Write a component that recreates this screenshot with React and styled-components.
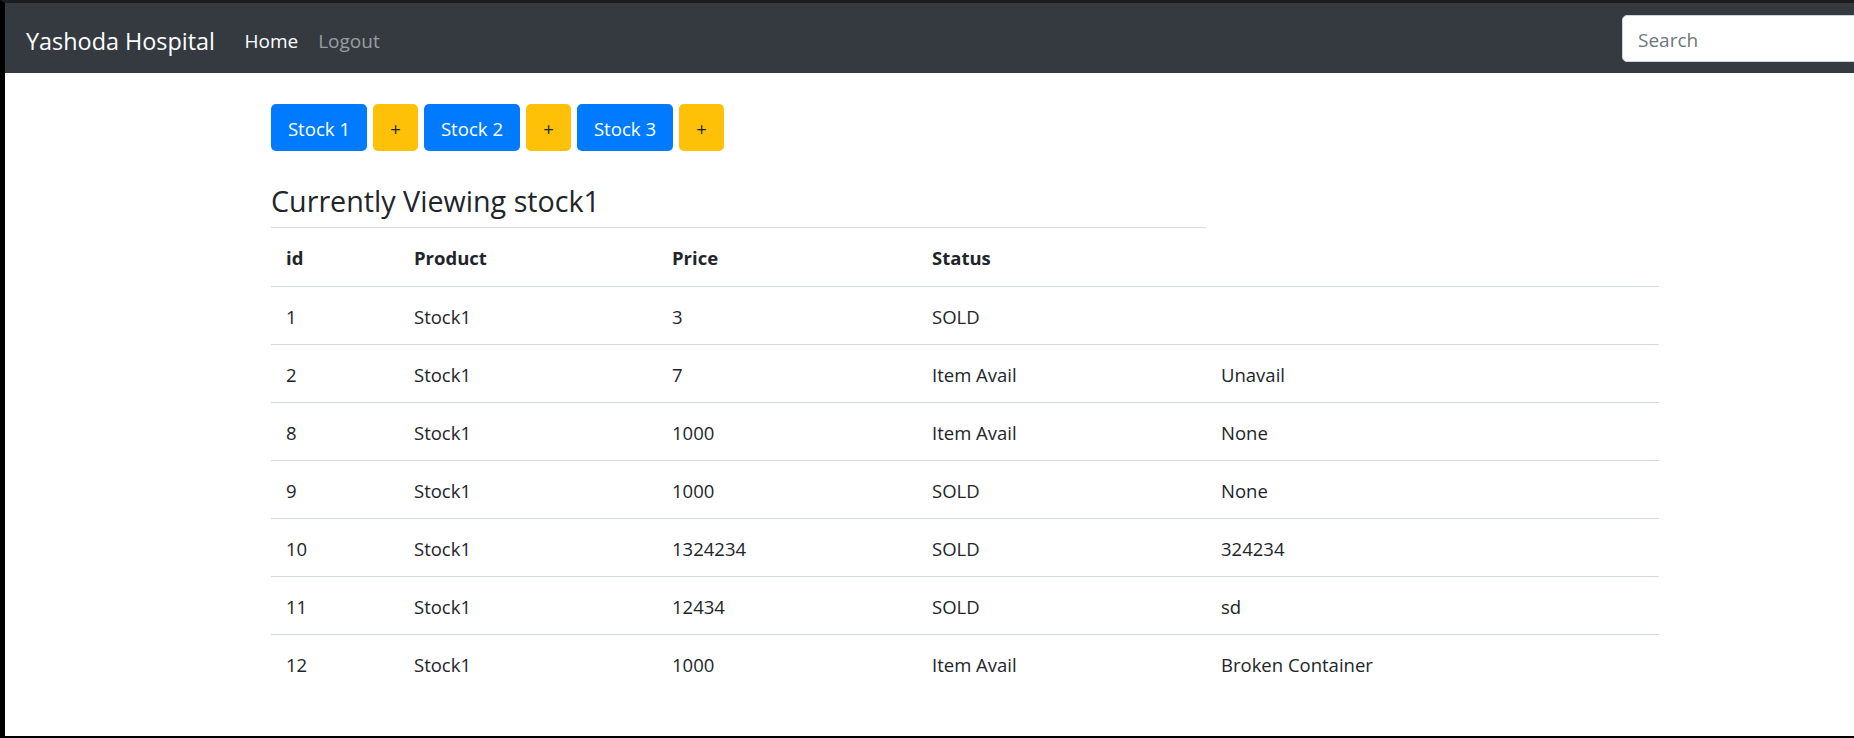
import React from "react";
import styled, { createGlobalStyle } from "styled-components";

const GlobalStyle = createGlobalStyle`
  html, body {
    margin: 0;
    padding: 0;
    background: #fff;
  }
  body {
    font-family: "Open Sans", "Noto Sans", Arial, sans-serif;
    color: #212529;
  }
  * {
    box-sizing: border-box;
  }
`;

const Frame = styled.div`
  height: 738px;
  overflow: hidden;
  border-left: 5px solid #000;
  border-top: 3px solid #1c1c1e;
  border-bottom: 2px solid #000;
  display: flex;
  flex-direction: column;
`;

const Navbar = styled.nav`
  height: 70px;
  flex-shrink: 0;
  background: #343a40;
  display: flex;
  align-items: center;
  padding-left: 21px;
`;

const Brand = styled.a`
  font-size: 23.4px;
  color: #fff;
  margin-right: 29.5px;
  padding-top: 6px;
  white-space: nowrap;
`;

const NavLink = styled.a`
  font-size: 19px;
  color: ${({ active }) => (active ? "#fff" : "rgba(255,255,255,0.5)")};
  margin-right: 20px;
  padding-top: 6px;
  white-space: nowrap;
`;

const Search = styled.input`
  margin-left: auto;
  margin-right: -120px;
  width: 352px;
  height: 47px;
  flex-shrink: 0;
  border: 1px solid #ced4da;
  border-radius: 5px;
  padding: 4px 15px 0;
  font-family: inherit;
  font-size: 19px;
  color: #495057;
  &::placeholder {
    color: #6c757d;
  }
`;

const Main = styled.main`
  padding: 31px 0 0 266px;
`;

const ButtonRow = styled.div`
  display: flex;
  gap: 6px;
`;

const Button = styled.button`
  height: 47px;
  padding: 2px ${({ small }) => (small ? "15px" : "16px")} 0;
  min-width: ${({ small }) => (small ? "45px" : "96px")};
  border: none;
  border-radius: 5px;
  font-family: inherit;
  font-size: 18.6px;
  color: ${({ variant }) => (variant === "warning" ? "#212529" : "#fff")};
  background: ${({ variant }) => (variant === "warning" ? "#ffc107" : "#007bff")};
`;

const Heading = styled.h4`
  margin: 32px 0 8px;
  font-size: 28.7px;
  font-weight: 400;
  line-height: 36px;
  color: #212529;
`;

const Table = styled.table`
  width: 1388px;
  border-collapse: collapse;
  table-layout: fixed;
  font-size: 18.5px;
`;

const Th = styled.th`
  text-align: left;
  font-weight: 700;
  padding: 15px 15px 14px;
  line-height: 29px;
  border-top: 1px solid #d4d9e2;
`;

const Td = styled.td`
  padding: 15px 15px 13px;
  line-height: 29px;
  border-top: 1px solid #d4d9e2;
  white-space: nowrap;
`;

const columns = [128, 258, 260, 289, 453];

const rows = [
  ["1", "Stock1", "3", "SOLD", ""],
  ["2", "Stock1", "7", "Item Avail", "Unavail"],
  ["8", "Stock1", "1000", "Item Avail", "None"],
  ["9", "Stock1", "1000", "SOLD", "None"],
  ["10", "Stock1", "1324234", "SOLD", "324234"],
  ["11", "Stock1", "12434", "SOLD", "sd"],
  ["12", "Stock1", "1000", "Item Avail", "Broken Container"],
];

export default function App() {
  return (
    <>
      <GlobalStyle />
      <Frame>
        <Navbar>
          <Brand>Yashoda Hospital</Brand>
          <NavLink active>Home</NavLink>
          <NavLink>Logout</NavLink>
          <Search placeholder="Search" />
        </Navbar>
        <Main>
          <ButtonRow>
            <Button>Stock 1</Button>
            <Button small variant="warning">+</Button>
            <Button>Stock 2</Button>
            <Button small variant="warning">+</Button>
            <Button>Stock 3</Button>
            <Button small variant="warning">+</Button>
          </ButtonRow>
          <Heading>Currently Viewing stock1</Heading>
          <Table>
            <colgroup>
              {columns.map((w, i) => (
                <col key={i} style={{ width: w }} />
              ))}
            </colgroup>
            <thead>
              <tr>
                <Th>id</Th>
                <Th>Product</Th>
                <Th>Price</Th>
                <Th>Status</Th>
              </tr>
            </thead>
            <tbody>
              {rows.map((r) => (
                <tr key={r[0]}>
                  {r.map((c, i) => (
                    <Td key={i}>{c}</Td>
                  ))}
                </tr>
              ))}
            </tbody>
          </Table>
        </Main>
      </Frame>
    </>
  );
}
